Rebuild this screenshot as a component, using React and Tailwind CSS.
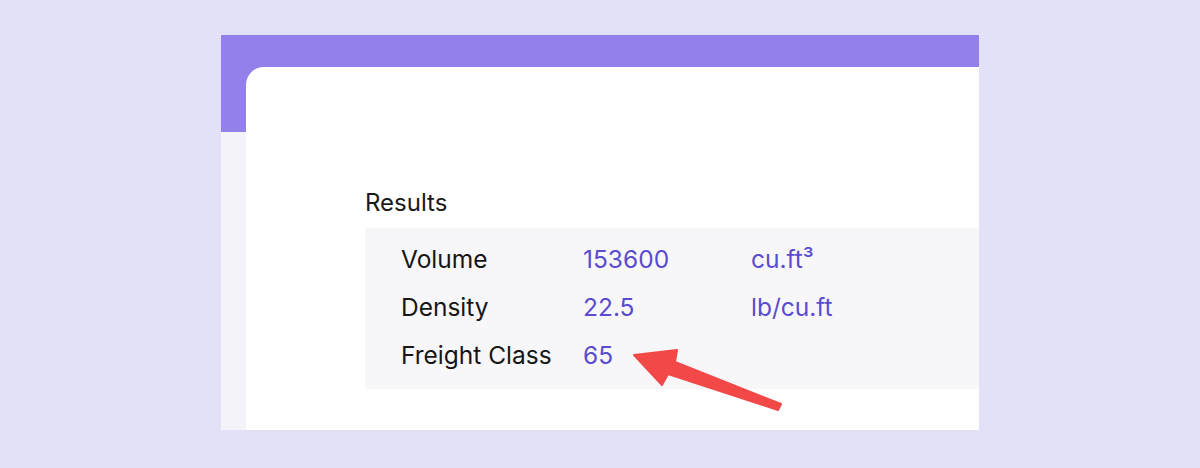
export default function App() {
  const rows = [
    { label: "Volume", value: "153600", unit: <>cu.ft³</> },
    { label: "Density", value: "22.5", unit: "lb/cu.ft" },
    { label: "Freight Class", value: "65", unit: "" },
  ];
  return (
    <div className="w-[1200px] h-[468px] bg-[#e2e1f8] pt-[35px] pl-[221px]" style={{ fontFamily: "Inter, 'Noto Sans', sans-serif" }}>
      <div className="relative w-[758px] h-[395px] bg-[#f4f3f9] overflow-hidden flex flex-col">
        <div className="h-[97px] bg-[#9380ea] shrink-0" />
        <div className="absolute left-[25px] top-[32px] right-0 bottom-0 bg-white rounded-tl-[18px] pt-[121px] pl-[119px]">
          <div className="text-[24px] leading-[30px] text-[#1a1a1a] mb-[10px]">Results</div>
          <div className="bg-[#f7f7fa] h-[161px] pl-[36px] pt-[16px] flex flex-col gap-[18px]">
            {rows.map((r) => (
              <div key={r.label} className="flex text-[24.5px] leading-[30px]">
                <div className="w-[182px] text-[#161616]">{r.label}</div>
                <div className="w-[168px] text-[#5a4bd0]">{r.value}</div>
                <div className="text-[#5a4bd0]">{r.unit}</div>
              </div>
            ))}
          </div>
        </div>
        <svg className="absolute left-0 top-0" width="758" height="395" viewBox="221 35 758 395">
          <polygon
            points="634,355 677,350 675,362 781,404 778,410 668,374 662,385"
            fill="#f24848"
            stroke="#f24848"
            strokeWidth="2"
            strokeLinejoin="round"
          />
        </svg>
      </div>
    </div>
  );
}
